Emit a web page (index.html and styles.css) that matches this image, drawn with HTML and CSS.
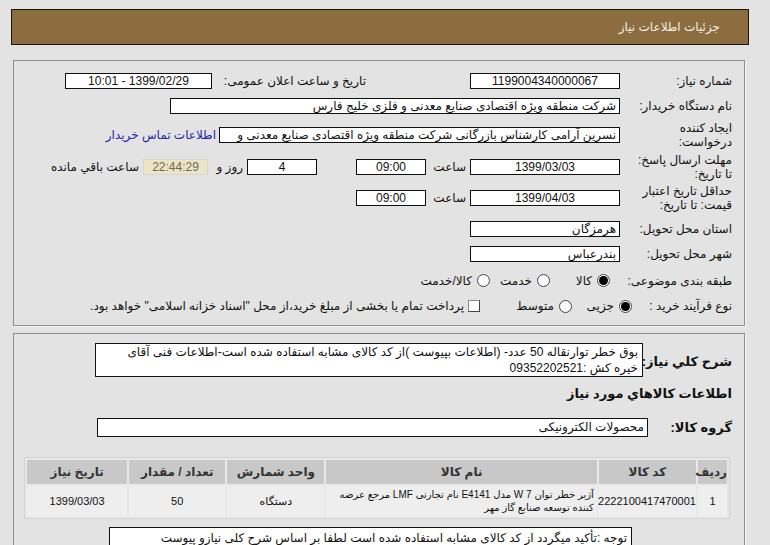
FILE: index.html
```html
<!DOCTYPE html>
<html lang="fa" dir="rtl">
<head>
<meta charset="utf-8">
<title>جزئیات اطلاعات نیاز</title>
<link rel="stylesheet" href="styles.css">
</head>
<body>
<div class="page">
  <div class="title-bar"><span class="title-text">جزئیات اطلاعات نیاز</span></div>

  <div class="panel panel-info">
    <div class="row r1">
      <div class="lbl">شماره نیاز:</div>
      <div class="box w150 center">1199004340000067</div>
      <div class="ann-cell">تاریخ و ساعت اعلان عمومی:</div>
      <div class="box w147 center">1399/02/29 - 10:01</div>
    </div>
    <div class="row r2">
      <div class="lbl">نام دستگاه خریدار:</div>
      <div class="box w450">شرکت منطقه ویژه اقتصادی صنایع معدنی و فلزی خلیج فارس</div>
    </div>
    <div class="row r3">
      <div class="lbl">ایجاد کننده درخواست:</div>
      <div class="box w401 clip">نسرین  آرامی  کارشناس بازرگانی  شرکت منطقه ویژه اقتصادی صنایع معدنی و</div>
      <a class="contact" href="#">اطلاعات تماس خریدار</a>
    </div>
    <div class="row r4">
      <div class="lbl">مهلت ارسال پاسخ: تا تاریخ:</div>
      <div class="box w150 center">1399/03/03</div>
      <div class="unit-cell">ساعت</div>
      <div class="box w70 center">09:00</div>
      <div class="day-gap"></div>
      <div class="box w70 center">4</div>
      <div class="day-cell">روز و</div>
      <div class="countdown">22:44:29</div>
      <div class="remain">ساعت باقي مانده</div>
    </div>
    <div class="row r5">
      <div class="lbl">حداقل تاریخ اعتبار قیمت: تا تاریخ:</div>
      <div class="box w150 center">1399/04/03</div>
      <div class="unit-cell">ساعت</div>
      <div class="box w70 center">09:00</div>
    </div>
    <div class="row r6">
      <div class="lbl">استان محل تحویل:</div>
      <div class="box w150">هرمزگان</div>
    </div>
    <div class="row r7">
      <div class="lbl">شهر محل تحویل:</div>
      <div class="box w150">بندرعباس</div>
    </div>
    <div class="row r8">
      <div class="lbl lbl-cat">طبقه بندی موضوعی:</div>
      <div class="opt o60"><span class="radio on"></span><span>کالا</span></div>
      <div class="opt o60"><span class="radio"></span><span>خدمت</span></div>
      <div class="opt"><span class="radio"></span><span>کالا/خدمت</span></div>
    </div>
    <div class="row r9">
      <div class="lbl lbl-proc">نوع فرآیند خرید :</div>
      <div class="opt o60"><span class="radio on"></span><span>جزیی</span></div>
      <div class="opt o92"><span class="radio"></span><span>متوسط</span></div>
      <div class="opt"><span class="check"></span><span>پرداخت تمام یا بخشی از مبلغ خرید،از محل "اسناد خزانه اسلامی" خواهد بود.</span></div>
    </div>
  </div>

  <div class="panel panel-goods">
    <div class="row g1">
      <div class="blbl w89">شرح کلي نياز:</div>
      <div class="box desc">بوق خطر توارنقاله 50 عدد- (اطلاعات بپیوست )از کد کالای مشابه استفاده شده است-اطلاعات فنی آقای<br>خیره کش :09352202521</div>
    </div>
    <div class="row g2">
      <div class="blbl">اطلاعات کالاهاي مورد نياز</div>
    </div>
    <div class="row g3">
      <div class="blbl w84">گروه کالا:</div>
      <div class="box w550">محصولات الکترونیکی</div>
    </div>
    <table class="items">
      <thead>
        <tr>
          <th class="c-row">ردیف</th>
          <th class="c-code">کد کالا</th>
          <th class="c-name">نام کالا</th>
          <th class="c-unit">واحد شمارش</th>
          <th class="c-qty">تعداد / مقدار</th>
          <th class="c-date">تاریخ نیاز</th>
        </tr>
      </thead>
      <tbody>
        <tr>
          <td>1</td>
          <td class="code">2222100417470001</td>
          <td class="name">آژیر خطر توان 7 W مدل E4141 نام تجارتی LMF مرجع عرضه<br>کننده توسعه صنایع گاز مهر</td>
          <td>دستگاه</td>
          <td>50</td>
          <td>1399/03/03</td>
        </tr>
      </tbody>
    </table>
    <div class="note">توجه :تأکید میگردد از کد کالای مشابه استفاده شده است  لطفا بر اساس شرح کلی نیازو پیوست</div>
  </div>
</div>
</body>
</html>
```

FILE: styles.css
```css
html, body {
  margin: 0;
  padding: 0;
  background: #e3e3e3;
  width: 770px;
}
body {
  font-family: "Liberation Sans", "DejaVu Sans", sans-serif;
  font-size: 12px;
  color: #111;
  overflow: hidden;
  height: 545px;
}
.page {
  box-sizing: border-box;
  width: 770px;
  padding: 9px 21px 0 11px;
}
.title-bar {
  box-sizing: border-box;
  width: 738px;
  height: 36px;
  background: #8c6d40;
  border: 1px solid #1c1408;
  display: flex;
  align-items: center;
}
.title-text {
  color: #f4efe2;
  font-size: 12px;
  margin-right: 28px;
}
.panel {
  box-sizing: border-box;
  width: 732px;
  margin-right: 4px;
  margin-left: 2px;
  border: 1px solid #8e8e8e;
  box-shadow: 1px 1px 0 #f6f6f6;
  padding: 5px 12px 7px 8px;
}
.panel-info {
  margin-top: 15px;
}
.panel-goods {
  margin-top: 7px;
  padding-top: 9px;
  height: 260px;
}
.row {
  display: flex;
  align-items: center;
}
.r1 { height: 29px; }
.r2 { height: 22px; }
.r3 { height: 36px; }
.r4 { height: 27px; }
.r5 { height: 36px; }
.r6 { height: 25px; }
.r7 { height: 26px; }
.r8 { height: 27px; }
.r9 { height: 24px; }

.lbl {
  width: 104px;
  flex-shrink: 0;
  margin-left: 8px;
  line-height: 14px;
  font-size: 12px;
}
.lbl-cat { width: 112px; margin-left: 8px; }
.lbl-proc { width: 98px; margin-left: 0; }

.box {
  box-sizing: border-box;
  flex-shrink: 0;
  background: #fff;
  border: 1px solid #111;
  height: 16px;
  line-height: 14px;
  padding: 0 3px;
  white-space: nowrap;
  overflow: hidden;
  font-size: 12px;
}
.center { text-align: center; }
.w150 { width: 150px; }
.w147 { width: 147px; }
.w450 { width: 450px; }
.w401 { width: 401px; }
.w70 { width: 70px; }
.w550 { width: 551px; height: 19px; line-height: 17px; }
.clip { text-overflow: clip; }

.ann-cell {
  box-sizing: border-box;
  width: 258px;
  padding-right: 104px;
  white-space: nowrap;
}
.contact {
  color: #1f1fa8;
  text-decoration: none;
  margin-right: 3px;
  white-space: nowrap;
}
.unit-cell {
  box-sizing: border-box;
  width: 44px;
  padding-right: 4px;
}
.day-gap { width: 39px; flex-shrink: 0; }
.day-cell {
  box-sizing: border-box;
  width: 39px;
  padding-right: 4px;
  white-space: nowrap;
}
.countdown {
  box-sizing: border-box;
  width: 65px;
  height: 16px;
  line-height: 14px;
  background: #ebe5c5;
  border: 1px solid #d6d6d6;
  color: #6e6a55;
  text-align: center;
}
.remain {
  margin-right: 4px;
  white-space: nowrap;
}

.opt {
  display: flex;
  align-items: center;
  flex-shrink: 0;
  white-space: nowrap;
}
.o60 { width: 60px; }
.o92 { width: 92px; }
.radio {
  box-sizing: border-box;
  width: 13px;
  height: 13px;
  border-radius: 50%;
  border: 1px solid #444;
  background: #fff;
  margin-right: 2px;
  margin-left: 5px;
  position: relative;
  flex-shrink: 0;
}
.radio.on::after {
  content: "";
  position: absolute;
  left: 1px;
  top: 1px;
  width: 9px;
  height: 9px;
  border-radius: 50%;
  background: #000;
}
.check {
  box-sizing: border-box;
  width: 12px;
  height: 12px;
  border: 1px solid #444;
  border-left-color: #888;
  border-top-color: #888;
  background: #fff;
  margin-right: 2px;
  margin-left: 4px;
  flex-shrink: 0;
}

.blbl {
  font-weight: bold;
  font-size: 13px;
  flex-shrink: 0;
  white-space: nowrap;
}
.w89 { width: 89px; }
.w84 { width: 84px; }
.g1 { height: 34px; align-items: flex-start; }
.g1 .blbl { padding-top: 11px; }
.desc {
  width: 548px;
  height: 34px;
  white-space: nowrap;
  line-height: 16px;
  padding: 0 4px 0 2px;
}
.g2 { height: 32px; }
.g3 { height: 36px; }

.items {
  margin-top: 12px;
  margin-right: 2px;
  width: 706px;
  border-collapse: separate;
  border-spacing: 2px;
  background: #e8e8e8;
  border: 1px solid #d2d2d2;
  font-size: 11px;
  table-layout: fixed;
}
.items th {
  background: #c8c8c8;
  height: 24px;
  font-weight: bold;
  font-size: 12px;
  color: #333;
  padding: 0;
}
.items td {
  background: #eeeeee;
  height: 30px;
  text-align: center;
  padding: 0 3px;
  line-height: 13px;
}
.items td.code { padding: 0; }
.items td.name { text-align: right; font-size: 10px; white-space: nowrap; overflow: hidden; padding: 0 3px 0 0; }
.c-row { width: 29px; }
.c-code { width: 97px; }
.c-name { width: 270px; }
.c-unit { width: 97px; }
.c-qty { width: 96px; }
.c-date { width: 100px; }

.note {
  box-sizing: border-box;
  width: 523px;
  margin-right: 100px;
  margin-top: 8px;
  background: #fff;
  border: 1px solid #111;
  padding: 2px 4px;
  line-height: 16px;
  height: 40px;
}
```
